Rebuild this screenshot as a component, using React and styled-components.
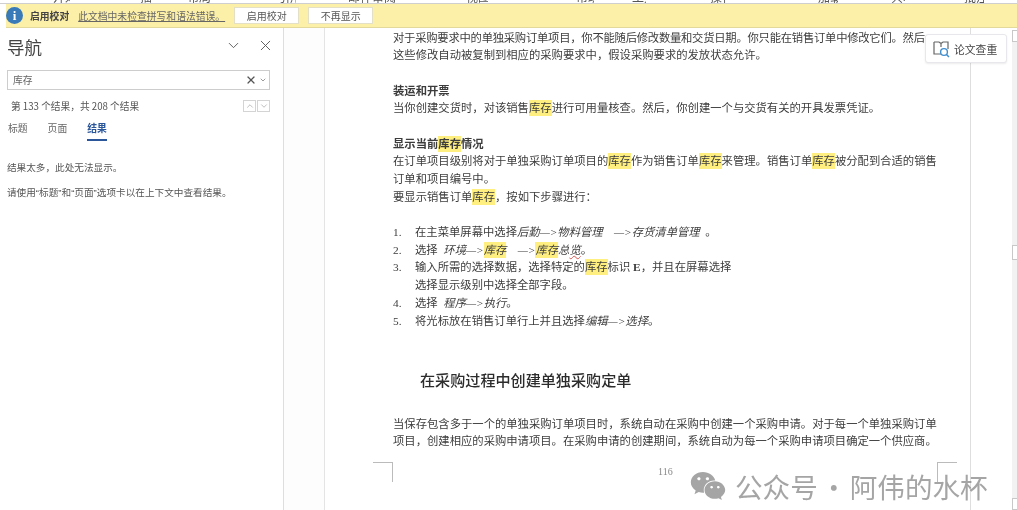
import React from "react";
import styled, { createGlobalStyle } from "styled-components";
import { ChevronDown, ChevronUp, X } from "lucide-react";
import { FaWeixin } from "react-icons/fa";

const sans = `"Noto Sans CJK SC", "Liberation Sans", sans-serif`;
const serif = `"Liberation Serif", "Noto Sans CJK SC", serif`;

const Global = createGlobalStyle`
  html, body { margin: 0; padding: 0; background: #fff; }
  #root { width: 1017px; height: 510px; overflow: hidden; }
  * { box-sizing: border-box; }
`;

const Window = styled.div`
  position: relative;
  width: 1017px;
  height: 510px;
  overflow: hidden;
  display: flex;
  flex-direction: column;
  font-family: ${sans};
  color: #444;
  filter: blur(0.45px);
`;

/* only the bottom edge of the ribbon labels is still in the shot */
const RibbonEdge = styled.div`
  height: 4px;
  flex: none;
  display: flex;
  align-items: flex-end;
  overflow: hidden;
  border-bottom: 1px solid #cfcfcf;
`;
const RibbonLabel = styled.span`
  flex: none;
  width: ${(p) => p.$w}px;
  margin-left: ${(p) => p.$gap}px;
  font-size: 12px;
  line-height: 12px;
  color: #555;
  white-space: nowrap;
  overflow: hidden;
`;

const MessageBar = styled.div`
  height: 24px;
  flex: none;
  margin-left: 6px;
  display: flex;
  align-items: center;
  background: #fcf0a9;
  border-bottom: 1px solid #e3d99a;
`;
const InfoBadge = styled.div`
  width: 17px;
  height: 17px;
  margin-left: 0;
  border-radius: 50%;
  background: #3a7ab8;
  color: #fff;
  font: bold 13px/17px ${serif};
  text-align: center;
`;
const BarTitle = styled.strong`
  margin-left: 7px;
  font-size: 9.8px;
  font-weight: 700;
  color: #444;
`;
const BarLink = styled.a`
  margin-left: 9px;
  width: 147px;
  font-size: 9.8px;
  color: #666;
  text-decoration: underline;
  white-space: nowrap;
`;
const BarButton = styled.button`
  width: ${(p) => p.$w}px;
  height: 17px;
  margin-left: ${(p) => p.$gap}px;
  padding: 0;
  background: #fff;
  border: 1px solid #e4e0c8;
  font: 10px/15px ${sans};
  color: #555;
`;

const Workspace = styled.div`
  flex: 1;
  display: flex;
  min-height: 0;
`;

const NavPane = styled.aside`
  width: 284px;
  flex: none;
  padding: 0 13px 0 7px;
  border-right: 1px solid #dedede;
`;
const NavHead = styled.div`
  height: 42px;
  padding-bottom: 4px;
  display: flex;
  align-items: center;
  color: #555;
`;
const NavTitle = styled.h1`
  margin: 0 auto 0 0;
  font-size: 17.5px;
  font-weight: 400;
  line-height: 38px;
  color: #444;
`;
const NavIcons = styled.div`
  display: flex;
  align-items: center;
  gap: 15px;
  margin-right: -4px;
  margin-top: -4px;
`;
const SearchBox = styled.div`
  height: 20px;
  width: 263px;
  display: flex;
  align-items: center;
  padding: 0 2px 0 5px;
  border: 1px solid #cdcdcd;
  font-size: 9.8px;
  color: #666;
`;
const SearchText = styled.span`
  flex: 1;
`;
const ResultRow = styled.div`
  display: flex;
  align-items: center;
  width: 263px;
  height: 14px;
  margin-top: 9px;
  padding-left: 4px;
  font-size: 9.7px;
  color: #555;
`;
const ResultText = styled.span`
  flex: 1;
  white-space: nowrap;
`;
const StepButton = styled.span`
  width: 13px;
  height: 12px;
  margin-left: 1px;
  display: flex;
  align-items: center;
  justify-content: center;
  border: 1px solid #d4d4d4;
  color: #999;
`;
const Tabs = styled.div`
  display: flex;
  gap: 20px;
  margin-top: 5px;
  margin-left: 1px;
`;
const Tab = styled.span`
  position: relative;
  font-size: 9.8px;
  line-height: 20px;
  height: 23px;
  font-weight: ${(p) => (p.$active ? 700 : 400)};
  color: ${(p) => (p.$active ? "#2b579a" : "#666")};
  border-bottom: 2px solid ${(p) => (p.$active ? "#2b579a" : "transparent")};
`;
const NavNote = styled.p`
  margin: ${(p) => p.$top}px 0 0;
  font-family: "Liberation Sans", "Noto Sans CJK SC", sans-serif;
  font-size: 9.65px;
  line-height: 14px;
  color: #555;
  white-space: nowrap;
`;

const Gutter = styled.div`
  width: 40px;
  flex: none;
  background: #fdfdfd;
`;

const Page = styled.main`
  width: 647px;
  flex: none;
  padding: 1.5px 0 0 68px;
  background: #fff;
  border-left: 1px solid #e4e4e4;
  border-right: 1px solid #dedede;
  font-family: ${serif};
  color: #3c3c3c;
  font-size: 11.33px;
`;
const Line = styled.div`
  height: 17.7px;
  line-height: 17.7px;
  white-space: pre;
  letter-spacing: ${(p) => p.$spacing || 0}px;
  font-weight: ${(p) => (p.$bold ? 700 : 400)};
  margin-top: ${(p) => (p.$gap ? "17.7px" : 0)};
`;
const ListRow = styled(Line)`
  display: grid;
  grid-template-columns: 22px 1fr;
`;
const Hit = styled.mark`
  padding: 2px 0;
  background: #ffee80;
  color: inherit;
`;
const Misspelt = styled.span`
  text-decoration: underline wavy #d9534f 1px;
`;
const SectionTitle = styled.h2`
  margin: 38.5px 0 23px 27px;
  font-size: 15.1px;
  line-height: 24px;
  font-weight: 500;
  color: #2c2c2c;
`;
const PageNumber = styled.div`
  margin: 14px 0 0 265px;
  font-size: 10px;
  line-height: 14px;
  color: #888;
`;

const RightRail = styled.div`
  flex: 1;
  display: flex;
  justify-content: flex-end;
  background: #fff;
`;
const ScrollTrack = styled.div`
  width: 5px;
  margin-top: 2px;
  display: flex;
  flex-direction: column;
  background: #f2f2f2;
`;
const ScrollCap = styled.span`
  height: 12px;
  background: #fff;
  border: 1px solid #c8c8c8;
  border-right: none;
  margin-top: ${(p) => (p.$end ? "auto" : 0)};
`;
const ScrollThumb = styled.span`
  height: 15px;
  margin-top: 203px;
  background: #fff;
  border: 1px solid #c8c8c8;
  border-right: none;
`;

const CheckButton = styled.button`
  position: absolute;
  left: 925px;
  top: 34px;
  width: 82px;
  height: 29px;
  padding: 0 0 0 7px;
  display: flex;
  align-items: center;
  gap: 4px;
  background: #fff;
  border: 1px solid #e8e8ec;
  border-radius: 3px;
  box-shadow: 0 1px 2px rgba(0, 0, 0, 0.08);
  font: 10.8px ${sans};
  color: #444;
`;

const CropMark = styled.span`
  position: absolute;
  top: 462px;
  left: ${(p) => p.$x}px;
  width: 20px;
  height: 20px;
  border-top: 1px solid #bbb;
  ${(p) => (p.$side === "left" ? "border-left" : "border-right")}: 1px solid #bbb;
`;

const Watermark = styled.div`
  position: absolute;
  left: 690px;
  top: 467px;
  display: flex;
  align-items: center;
  gap: 9px;
  color: rgba(130, 130, 130, 0.72);
  font: 27.6px/38px ${sans};
  word-spacing: -4px;
  white-space: pre;
`;

const ribbon = [
  [53, 17, "开始"],
  [70, 12, "插入"],
  [35, 28, "布局"],
  [63, 18, "引用"],
  [52, 53, "邮件审阅"],
  [65, 22, "视图"],
  [88, 18, "帮助"],
  [38, 14, "工具"],
  [64, 16, "操作"],
  [92, 20, "加载"],
  [53, 14, "共享"],
  [59, 20, "批注"],
];

const PaperCheckIcon = () => (
  <svg width="17" height="18" viewBox="0 0 17 18" fill="none">
    <path d="M1 2h5l2 1.5L10 2h5v7M1 2v12h7M8 3.5V7" stroke="#666" strokeWidth="1.2" />
    <circle cx="11" cy="12" r="3.4" stroke="#3f8fd0" strokeWidth="1.4" />
    <path d="M13.5 14.5L16 17" stroke="#3f8fd0" strokeWidth="1.5" />
  </svg>
);

const App = () => {
  return (
    <Window>
      <Global />
      <RibbonEdge>
        {ribbon.map(([gap, w, text]) => (
          <RibbonLabel key={text} $gap={gap} $w={w}>
            {text}
          </RibbonLabel>
        ))}
      </RibbonEdge>
      <MessageBar>
        <InfoBadge>i</InfoBadge>
        <BarTitle>启用校对</BarTitle>
        <BarLink>此文档中未检查拼写和语法错误。</BarLink>
        <BarButton $w={65} $gap={9}>启用校对</BarButton>
        <BarButton $w={65} $gap={9}>不再显示</BarButton>
      </MessageBar>
      <Workspace>
        <NavPane>
          <NavHead>
            <NavTitle>导航</NavTitle>
            <NavIcons>
              <ChevronDown size={17} strokeWidth={1.3} />
              <X size={17} strokeWidth={1.3} />
            </NavIcons>
          </NavHead>
          <SearchBox>
            <SearchText>库存</SearchText>
            <X size={12} strokeWidth={2.4} color="#555" />
            <ChevronDown size={8} strokeWidth={2} style={{ marginLeft: 2 }} />
          </SearchBox>
          <ResultRow>
            <ResultText>第 133 个结果，共 208 个结果</ResultText>
            <StepButton><ChevronUp size={10} strokeWidth={1.5} /></StepButton>
            <StepButton><ChevronDown size={10} strokeWidth={1.5} /></StepButton>
          </ResultRow>
          <Tabs>
            <Tab>标题</Tab>
            <Tab>页面</Tab>
            <Tab $active>结果</Tab>
          </Tabs>
          <NavNote $top={20}>结果太多，此处无法显示。</NavNote>
          <NavNote $top={11}>请使用“标题”和“页面”选项卡以在上下文中查看结果。</NavNote>
        </NavPane>
        <Gutter />
        <Page>
          <Line $spacing={-0.25}>对于采购要求中的单独采购订单项目，你不能随后修改数量和交货日期。你只能在销售订单中修改它们。然后</Line>
          <Line>这些修改自动被复制到相应的采购要求中，假设采购要求的发放状态允许。</Line>
          <Line $gap $bold>装运和开票</Line>
          <Line>当你创建交货时，对该销售<Hit>库存</Hit>进行可用量核查。然后，你创建一个与交货有关的开具发票凭证。</Line>
          <Line $gap $bold>显示当前<Hit>库存</Hit>情况</Line>
          <Line>在订单项目级别将对于单独采购订单项目的<Hit>库存</Hit>作为销售订单<Hit>库存</Hit>来管理。销售订单<Hit>库存</Hit>被分配到合适的销售</Line>
          <Line>订单和项目编号中。</Line>
          <Line>要显示销售订单<Hit>库存</Hit>，按如下步骤进行：</Line>
          <ListRow $gap>
            <span>1.</span>
            <span>在主菜单屏幕中选择<em>后勤—&gt;物料管理    —&gt;存货清单管理</em>  。</span>
          </ListRow>
          <ListRow>
            <span>2.</span>
            <span>选择  <em>环境—&gt;<Hit>库存</Hit>    —&gt;<Hit>库存</Hit>总<Misspelt>览</Misspelt></em>。</span>
          </ListRow>
          <ListRow>
            <span>3.</span>
            <span>输入所需的选择数据，选择特定的<Hit>库存</Hit>标识 <b>E</b>，并且在屏幕选择</span>
          </ListRow>
          <ListRow>
            <span />
            <span>选择显示级别中选择全部字段。</span>
          </ListRow>
          <ListRow>
            <span>4.</span>
            <span>选择  <em>程序—&gt;执行</em>。</span>
          </ListRow>
          <ListRow>
            <span>5.</span>
            <span>将光标放在销售订单行上并且选择<em>编辑—&gt;选择</em>。</span>
          </ListRow>
          <SectionTitle>在采购过程中创建单独采购定单</SectionTitle>
          <Line>当保存包含多于一个的单独采购订单项目时，系统自动在采购中创建一个采购申请。对于每一个单独采购订单</Line>
          <Line>项目，创建相应的采购申请项目。在采购申请的创建期间，系统自动为每一个采购申请项目确定一个供应商。</Line>
          <PageNumber>116</PageNumber>
        </Page>
        <RightRail>
          <ScrollTrack>
            <ScrollCap />
            <ScrollThumb />
            <ScrollCap $end />
          </ScrollTrack>
        </RightRail>
      </Workspace>
      <CheckButton>
        <PaperCheckIcon />
        论文查重
      </CheckButton>
      <CropMark $x={373} $side="right" />
      <CropMark $x={937} $side="left" />
      <Watermark>
        <FaWeixin size={36} />
        公众号 · 阿伟的水杯
      </Watermark>
    </Window>
  );
};

export default App;
